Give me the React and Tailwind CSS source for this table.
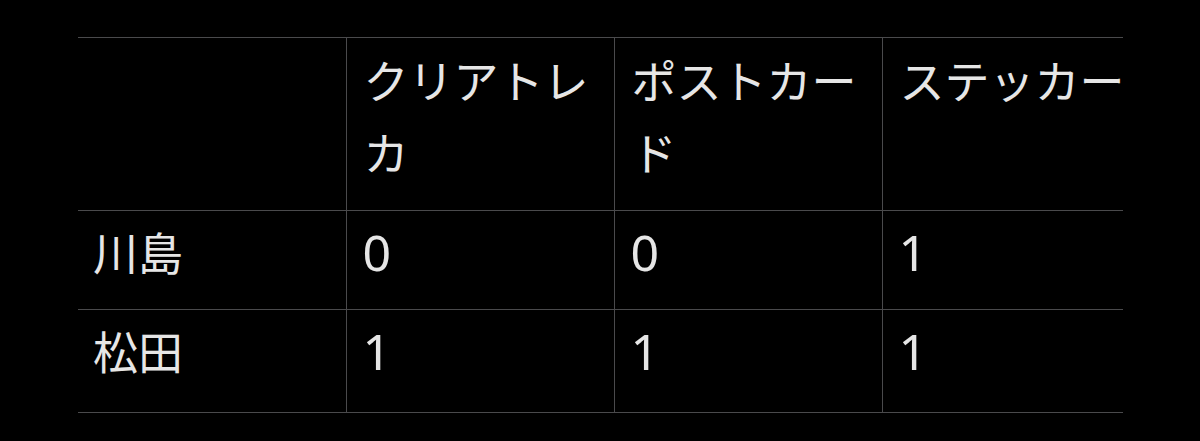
const headers = ['クリアトレカ', 'ポストカード', 'ステッカー']

const rows = [
  { name: '川島', values: [0, 0, 1] },
  { name: '松田', values: [1, 1, 1] },
]

export default function App() {
  return (
    <div
      className="w-[1200px] h-[441px] bg-black pt-[37px] pl-[78px] text-[#e6e6e6]"
      style={{ fontFamily: '"Noto Sans CJK JP", "Noto Sans", sans-serif' }}
    >
      <table className="w-[1045px] table-fixed border-collapse text-[45px] leading-[72px]">
        <colgroup>
          <col className="w-[268px]" />
          <col className="w-[268px]" />
          <col className="w-[268px]" />
          <col className="w-[241px]" />
        </colgroup>
        <thead>
          <tr className="border-t border-b border-[#4a4a4c]">
            <th className="pt-[6px] pb-[22px]" />
            {headers.map((h, i) => (
              <th
                key={h}
                className={`border-l border-[#4a4a4c] pl-[17px] pt-[6px] pb-[22px] text-left align-top font-normal ${i === 2 ? 'pr-0 whitespace-nowrap' : 'pr-[10px]'}`}
              >
                {h}
              </th>
            ))}
          </tr>
        </thead>
        <tbody>
          {rows.map((r, ri) => (
            <tr key={r.name} className="border-b border-[#4a4a4c]">
              <td className={`pl-[15px] pt-[5px] ${ri === 0 ? 'pb-[21px]' : 'pb-[25px]'}`}>{r.name}</td>
              {r.values.map((v, i) => (
                <td
                  key={i}
                  className={`border-l border-[#4a4a4c] pl-[16px] pt-[5px] text-[50px] ${ri === 0 ? 'pb-[21px]' : 'pb-[25px]'}`}
                  style={{ fontFamily: '"Noto Sans", sans-serif' }}
                >
                  {v}
                </td>
              ))}
            </tr>
          ))}
        </tbody>
      </table>
    </div>
  )
}
